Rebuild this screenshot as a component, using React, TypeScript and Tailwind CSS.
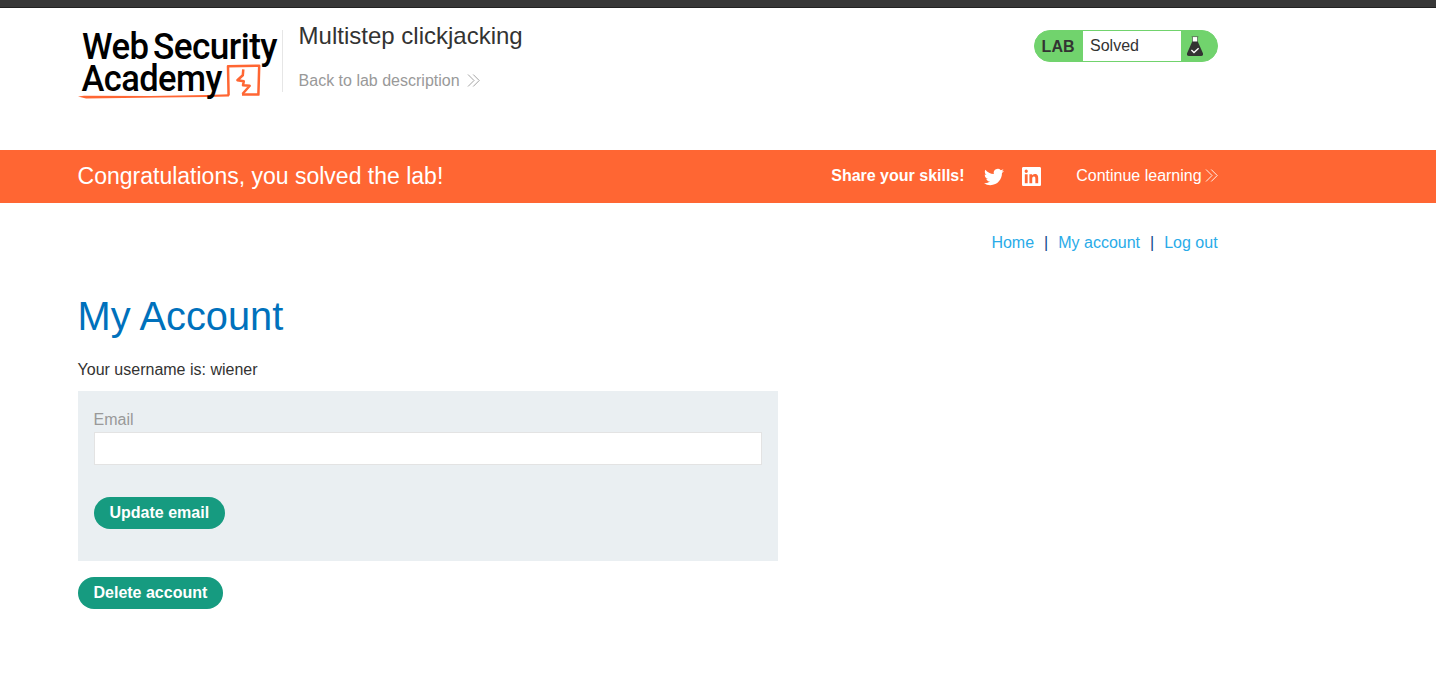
import React from "react";

function Logo() {
  return (
    <svg className="block h-[76px] w-[204px] overflow-visible" viewBox="78 26 204 76" aria-label="Web Security Academy">
      <g fill="#000" fontFamily="Roboto, sans-serif" fontSize="37.5" fontWeight="500" letterSpacing="-0.6">
        <text x="82" y="58.5" textLength="66.5" lengthAdjust="spacingAndGlyphs">Web</text>
        <text x="153" y="58.5" textLength="124" lengthAdjust="spacingAndGlyphs">Security</text>
      </g>
      <path
        d="M78 96.4L84 95.8L150 96L207 95L229 94.3L229 96.4L207 97L160 97.4L86 98.4Z"
        fill="#ff6633"
      />
      <g fill="none" stroke="#ff6633" strokeLinejoin="round">
        <path d="M228.6 95.5L228 66.2L259.2 65.8L258.4 94.6L242 94.6" strokeWidth="2.5" />
        <path d="M243.3 69.3L242.8 75.3L237.4 80.2L243.8 81.2L243 85.2L249.7 85.8L242.5 94" strokeWidth="2.5" />
      </g>
      <text x="81.5" y="91.3" textLength="140.3" lengthAdjust="spacingAndGlyphs" letterSpacing="-0.6" fill="#000" fontFamily="Roboto, sans-serif" fontSize="37.5" fontWeight="500">Academy</text>
    </svg>
  );
}

function Chevrons() {
  return (
    <svg className="block h-3.5 w-[13px]" viewBox="0 0 13 14" fill="none" stroke="currentColor" strokeWidth="0.9">
      <path d="M1 .5L7 6.5L1 12.5M6.2 .5L12.2 6.5L6.2 12.5" />
    </svg>
  );
}

function Flask() {
  return (
    <svg className="block h-5 w-4" viewBox="0 0 16 20">
      <path d="M5.4 .8H10.6V6H5.4Z" fill="#fff" />
      <path d="M4.7 .6H11.3M5.5 1V6M10.5 1V6" fill="none" stroke="#4b5a48" strokeWidth="0.7" />
      <path d="M5.2 5.4H10.8L16 17.6Q16.4 20 14 20H2Q-.4 20 0 17.6Z" fill="#333332" />
      <path d="M4.4 14L7 16.5L11.6 12.2" fill="none" stroke="#fff" strokeWidth="1.3" />
    </svg>
  );
}

export default function App() {
  return (
    <div className="h-[692px] overflow-hidden bg-white font-['Liberation_Sans',Arial,sans-serif] text-base leading-6 text-[#333332]">
      <div className="h-2 border-b border-[#222] bg-[#383838]" />
      <header className="flex h-[142px] items-start pl-[77.6px] pr-[218.4px] pt-[18px]">
        <Logo />
        <div className="mt-1 h-[62px] border-l border-[#e6e6e6] pl-4">
          <h2 className="-mt-2 text-2xl leading-7">Multistep clickjacking</h2>
          <a className="mt-[19px] flex items-center gap-[7px] text-[#999]">
            Back to lab description <Chevrons />
          </a>
        </div>
        <div className="ml-auto mt-1 flex h-8 w-[184px] items-stretch overflow-hidden rounded-2xl border border-[#71d36d] bg-[#71d36d]">
          <span className="w-12 pl-[7px] font-bold leading-[31px]">LAB</span>
          <span className="w-[98px] bg-white pl-[7.4px] leading-[29px]">Solved</span>
          <span className="pl-[6.4px] pt-[5px]"><Flask /></span>
        </div>
      </header>

      <section className="flex h-[53px] items-center bg-[#ff6633] pb-0.5 pl-[77.6px] pr-[218.4px] text-white">
        <p className="text-[23px]">Congratulations, you solved the lab!</p>
        <div className="ml-auto flex items-center">
          <span className="font-bold">Share your skills!</span>
          <svg className="relative top-px ml-[19px] h-5 w-5" viewBox="0 0 24 24" fill="currentColor">
            <path d="M23.953 4.57a10 10 0 01-2.825.775 4.958 4.958 0 002.163-2.723c-.951.555-2.005.959-3.127 1.184a4.92 4.92 0 00-8.384 4.482C7.69 8.095 4.067 6.13 1.64 3.162a4.822 4.822 0 00-.666 2.475c0 1.71.87 3.213 2.188 4.096a4.904 4.904 0 01-2.228-.616v.06a4.923 4.923 0 003.946 4.827 4.996 4.996 0 01-2.212.085 4.936 4.936 0 004.604 3.417 9.867 9.867 0 01-6.102 2.105c-.39 0-.779-.023-1.17-.067a13.995 13.995 0 007.557 2.209c9.053 0 13.998-7.496 13.998-13.985 0-.21 0-.42-.015-.63A9.935 9.935 0 0024 4.59z" />
          </svg>
          <svg className="relative top-px ml-[18.6px] h-[19px] w-[19px]" viewBox="0 0 24 24" fill="currentColor">
            <path d="M20.447 20.452h-3.554v-5.569c0-1.328-.027-3.037-1.852-3.037-1.853 0-2.136 1.445-2.136 2.939v5.667H9.351V9h3.414v1.561h.046c.477-.9 1.637-1.85 3.37-1.85 3.601 0 4.267 2.37 4.267 5.455v6.286zM5.337 7.433a2.062 2.062 0 01-2.063-2.065 2.064 2.064 0 112.063 2.065zm1.782 13.019H3.555V9h3.564v11.452zM22.225 0H1.771C.792 0 0 .774 0 1.729v20.542C0 23.227.792 24 1.771 24h20.451C23.2 24 24 23.227 24 22.271V1.729C24 .774 23.2 0 22.222 0h.003z" />
          </svg>
          <a className="ml-[35px] flex items-center gap-[3px]">Continue learning <Chevrons /></a>
        </div>
      </section>

      <main className="pl-[77.6px] pr-[218.4px]">
        <nav className="flex justify-end gap-2.5 pt-7 text-[#29abe8]">
          <a>Home</a>
          <span className="text-[#0e4a87]">|</span>
          <a>My account</a>
          <span className="text-[#0e4a87]">|</span>
          <a>Log out</a>
        </nav>
        <h1 className="mt-[37px] text-[39.8px] leading-[48px] text-[#0071bc]">My Account</h1>
        <p className="mt-[18px]">Your username is: wiener</p>
        <form className="mt-[9px] h-[170px] w-[700px] bg-[#eaeff2] px-4 pt-[17px]">
          <label className="block h-6 text-[#999]">Email</label>
          <input className="block h-[33px] w-full border border-[#e3e3e3] bg-white px-2 outline-none" aria-label="Email" />
          <button type="button" className="mt-8 h-8 w-[131.4px] rounded-full bg-[#169b80] font-bold leading-8 text-white">Update email</button>
        </form>
        <button type="button" className="mt-4 h-8 w-[145.6px] rounded-full bg-[#169b80] font-bold leading-8 text-white">Delete account</button>
      </main>
    </div>
  );
}
